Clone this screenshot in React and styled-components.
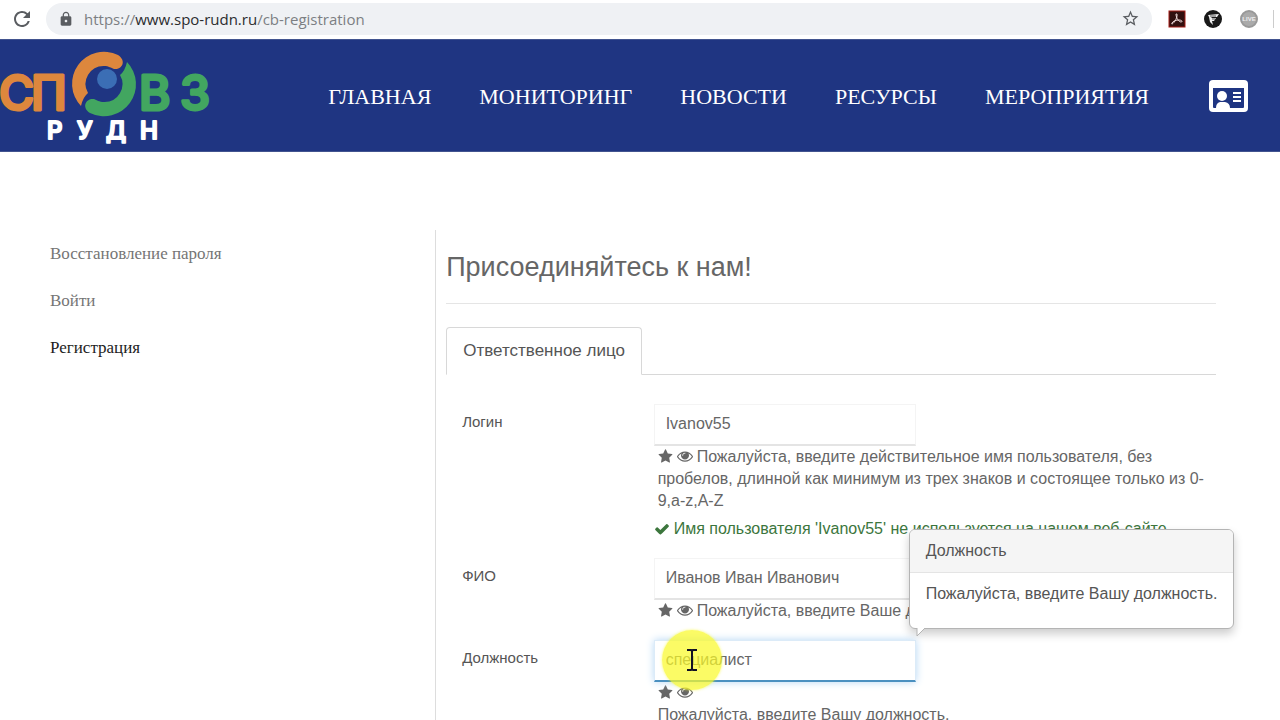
import React from "react";
import styled, { createGlobalStyle } from "styled-components";
import { MdLock, MdRefresh, MdStarBorder } from "react-icons/md";

const GlobalStyle = createGlobalStyle`
  * {
    box-sizing: border-box;
  }
  body {
    margin: 0;
    background: #fff;
    color: #666;
    font-family: "Liberation Sans", Arial, sans-serif;
    font-size: 16px;
    line-height: 22px;
  }
`;

/* browser toolbar */

const Toolbar = styled.div`
  display: flex;
  align-items: center;
  height: 39px;
  padding: 0 6px 2px 10px;
  background: #fff;
`;

const ToolButton = styled.button`
  display: flex;
  padding: 0;
  border: none;
  background: none;
  color: #5a5d61;
  cursor: pointer;
`;

const AddressBar = styled.div`
  display: flex;
  flex: 1;
  align-items: center;
  height: 32px;
  margin: 0 16px 0 12px;
  padding: 0 12px;
  border-radius: 16px;
  background: #eff1f4;
  color: #5a5d61;
`;

const Address = styled.span`
  flex: 1;
  margin-left: 10px;
  color: #7c7f83;
  font-family: "Open Sans", "Noto Sans", sans-serif;
  font-size: 15px;
`;

const Host = styled.span`
  color: #2b2c2e;
`;

const Extensions = styled.div`
  display: flex;
  gap: 18px;
  padding-right: 15px;
  border-right: 1px solid #ccc;
`;

/* site header */

const Header = styled.header`
  display: flex;
  align-items: center;
  justify-content: space-between;
  height: 113px;
  padding-right: 32px;
  background: #1f3582;
  border-top: 1px solid #42548f;
  border-bottom: 1px solid #42548f;
`;

const HomeLink = styled.a`
  display: flex;
`;

const Nav = styled.nav`
  display: flex;
  align-items: center;
  gap: 48px;
`;

const NavLink = styled.a`
  padding-top: 2px;
  color: #fff;
  font-family: "Liberation Serif", "Times New Roman", serif;
  font-size: 22px;
  line-height: 28px;
  text-decoration: none;
`;

const ProfileLink = styled.a`
  display: flex;
  margin-left: 12px;
`;

/* content */

const Page = styled.div`
  display: grid;
  grid-template-columns: 34% 1fr;
  padding-top: 78px;
`;

const Sidebar = styled.aside`
  display: flex;
  flex-direction: column;
  align-items: flex-start;
  gap: 25px;
  padding: 13px 0 0 50px;
`;

const SideLink = styled.a`
  color: ${(props) => (props.$active ? "#1d1d1d" : "#757575")};
  font-family: "Liberation Serif", "Times New Roman", serif;
  font-size: 17px;
  text-decoration: none;
`;

const Main = styled.main`
  padding: 20px 64px 0 10px;
  border-left: 1px solid #ddd;
`;

const Title = styled.h1`
  margin: 0 0 23px;
  padding-bottom: 19px;
  border-bottom: 1px solid #e5e5e5;
  color: #666;
  font-size: 27px;
  font-weight: normal;
  line-height: 34px;
`;

const Tabs = styled.div`
  display: flex;
  margin-bottom: 29px;
  border-bottom: 1px solid #d8d8d8;
`;

const Tab = styled.button`
  height: 48px;
  margin-bottom: -1px;
  padding: 0 16px;
  border: 1px solid #d8d8d8;
  border-bottom-color: #fff;
  border-radius: 4px 4px 0 0;
  background: #fff;
  color: #555;
  font-family: inherit;
  font-size: 17px;
`;

const Row = styled.div`
  display: grid;
  grid-template-columns: 25% 1fr;
  margin-bottom: 18px;
`;

const Label = styled.label`
  padding: 7px 0 0 16px;
  color: #555;
  font-size: 15px;
`;

const Field = styled.div`
  padding-left: 15px;
`;

const Input = styled.input`
  display: block;
  width: 262px;
  height: 42px;
  padding: 0 11px 2px;
  border: 1px solid #f4f4f4;
  border-bottom: 2px solid #e4e4e4;
  border-radius: 0;
  outline: none;
  background: #fff;
  color: #666;
  font-family: inherit;
  font-size: 16px;

  ${(props) =>
    props.$focused &&
    `
    border-color: #dcebf8;
    border-bottom-color: #4a90c0;
    box-shadow: 0 0 8px #b5d7f5;
  `}
`;

const Help = styled.div`
  padding-left: 4px;
  color: #666;

  svg {
    margin-right: 4px;
    vertical-align: -2px;
  }
`;

const Valid = styled.div`
  display: flex;
  align-items: center;
  gap: 4px;
  margin-top: 6px;
  color: #3c763d;
`;

const InputWrap = styled.div`
  position: relative;
  width: 262px;
`;

const Popover = styled.div`
  position: absolute;
  z-index: 2;
  bottom: calc(100% + 11px);
  left: 255px;
  width: 325px;
`;

const PopoverBox = styled.div`
  border: 1px solid #b4b4b4;
  border-radius: 6px;
  background: #fff;
  box-shadow: 0 5px 10px rgba(0, 0, 0, 0.2);
  color: #555;
  overflow: hidden;
`;

const PopoverTitle = styled.div`
  padding: 10px 16px;
  border-bottom: 1px solid #e4e4e4;
  background: #f5f5f5;
`;

const PopoverBody = styled.div`
  padding: 10px 16px 23px;
  white-space: nowrap;
`;

const PopoverArrow = styled.svg`
  position: absolute;
  top: calc(100% - 1px);
  left: 7px;
`;

const Pointer = styled.div`
  position: absolute;
  top: -10px;
  left: 8px;
  display: flex;
  align-items: center;
  justify-content: center;
  width: 60px;
  height: 60px;
  border-radius: 50%;
  background: rgba(250, 249, 42, 0.72);
  box-shadow: 0 0 3px rgba(250, 249, 42, 0.7);
  pointer-events: none;
`;

const Star = () => (
  <svg width="15" height="15" viewBox="0 0 1664 1792" fill="#666">
    <path d="M1664 647q0 22-26 48l-363 354 86 500q1 7 1 20 0 21-10.500 35.500t-30.500 14.500q-19 0-40-12l-449-236-449 236q-22 12-40 12-21 0-31.500-14.500t-10.500-35.500q0-6 2-20l86-500-364-354q-25-27-25-48 0-37 56-46l502-73 225-455q19-41 49-41t49 41l225 455 502 73q56 9 56 46z" />
  </svg>
);

const Eye = () => (
  <svg width="16" height="16" viewBox="0 0 1792 1792" fill="#666">
    <path d="M1664 960q-152-236-381-353 61 104 61 225 0 185-131.500 316.500t-316.500 131.500-316.500-131.500-131.500-316.500q0-121 61-225-229 117-381 353 133 205 333.500 326.500t434.500 121.500 434.500-121.500 333.500-326.500zm-720-384q0-20-14-34t-34-14q-125 0-214.500 89.500t-89.500 214.500q0 20 14 34t34 14 34-14 14-34q0-86 61-147t147-61q20 0 34-14t14-34zm848 384q0 34-20 69-140 230-376.500 368.500t-499.500 138.500-499.500-139-376.500-368q-20-35-20-69t20-69q140-229 376.500-368t499.500-139 499.500 139 376.500 368q20 35 20 69z" />
  </svg>
);

const Check = () => (
  <svg width="16" height="16" viewBox="0 0 1792 1792" fill="#3c763d">
    <path d="M1671 566q0 40-28 68l-724 724-136 136q-28 28-68 28t-68-28l-136-136-362-362q-28-28-28-68t28-68l136-136q28-28 68-28t68 28l294 295 656-657q28-28 68-28t68 28l136 136q28 28 28 68z" />
  </svg>
);

const Logo = () => (
  <svg width="220" height="110" viewBox="0 0 220 110">
    <g
      fontFamily="Inter, sans-serif"
      fontWeight="500"
      strokeLinejoin="round"
      strokeLinecap="round"
    >
      <g fontSize="48" strokeWidth="3">
        <text x="-1 31" y="69" fill="#dd873d" stroke="#dd873d">
          СП
        </text>
        <text x="139 180" y="69" fill="#42a660" stroke="#42a660">
          ВЗ
        </text>
      </g>
      <text
        x="47 77 106 140"
        y="98"
        fontSize="24"
        fill="#fff"
        stroke="#fff"
        strokeWidth="2"
      >
        РУДН
      </text>
    </g>
    <path
      d="M81 65 A32 32 0 0 1 118 14 C127 20 122 29 114 28 C111 27 109 25 104 25 A18 18 0 0 0 88 52 Q83 56 81 65 Z"
      fill="#dd873d"
    />
    <path
      d="M127 21 A32 32 0 0 1 90 72 C81 66 86 57 94 58 C97 59 99 61 104 61 A18 18 0 0 0 120 34 Q125 30 127 21 Z"
      fill="#42a660"
    />
    <circle cx="107" cy="38" r="10" fill="#3b6eb5" />
  </svg>
);

const ProfileIcon = () => (
  <svg width="39" height="32" viewBox="0 0 39 32">
    <rect width="39" height="32" rx="4" fill="#fff" />
    <path d="M4 8h31v19q0 1-1 1H21q0-5-5-6h-5q-4 1-4 6H5q-1 0-1-1z" fill="#1f3582" />
    <circle cx="13" cy="16" r="5" fill="#fff" />
    <path d="M24 13h8M24 17h8M24 21h8" stroke="#fff" strokeWidth="2" />
  </svg>
);

const AcrobatIcon = () => (
  <svg width="18" height="18" viewBox="0 0 18 18">
    <rect x="1" y="1" width="16" height="16" fill="#31100f" stroke="#a51c17" strokeWidth="1" />
    <path
      d="M8 4c2-1 1 4-1 7s-4 4-3 2 4-3 7-3 4 2 2 2-5-4-5-8z"
      fill="none"
      stroke="#f3dede"
      strokeWidth="1"
    />
  </svg>
);

const ShieldIcon = () => (
  <svg width="18" height="18" viewBox="0 0 18 18">
    <circle cx="9" cy="9" r="9" fill="#191919" />
    <path d="M4 5l11-1-2 3H8l-1 1h5l-2 3H8l1 4-3-3-1-5z" fill="#eee" />
    <path d="M6 6h6M8 9h3" stroke="#555" />
  </svg>
);

const LiveIcon = () => (
  <svg width="18" height="18" viewBox="0 0 18 18">
    <circle cx="9" cy="9" r="8" fill="#aaa" stroke="#999" strokeWidth="2" />
    <text
      x="9"
      y="11"
      fill="#eee"
      fontFamily="Liberation Sans, sans-serif"
      fontSize="6"
      fontWeight="bold"
      textAnchor="middle"
    >
      LIVE
    </text>
  </svg>
);

const IBeam = () => (
  <svg width="12" height="22" viewBox="0 0 12 22">
    <path d="M1 1h4l1 1 1-1h4M6 2v18M1 21h4l1-1 1 1h4" fill="none" stroke="#111125" strokeWidth="2" />
  </svg>
);

const navItems = ["ГЛАВНАЯ", "МОНИТОРИНГ", "НОВОСТИ", "РЕСУРСЫ", "МЕРОПРИЯТИЯ"];

export default class App extends React.Component {
  state = {
    login: "Ivanov55",
    name: "Иванов Иван Иванович",
    position: "специалист",
  };

  change = (e) => {
    this.setState({ [e.target.name]: e.target.value });
  };

  render() {
    return (
      <>
        <GlobalStyle />
        <Toolbar>
          <ToolButton aria-label="Обновить">
            <MdRefresh size={24} />
          </ToolButton>
          <AddressBar>
            <MdLock size={16} />
            <Address>
              https://<Host>www.spo-rudn.ru</Host>/cb-registration
            </Address>
            <ToolButton aria-label="Закладка">
              <MdStarBorder size={19} />
            </ToolButton>
          </AddressBar>
          <Extensions>
            <ToolButton aria-label="Acrobat">
              <AcrobatIcon />
            </ToolButton>
            <ToolButton aria-label="Shield">
              <ShieldIcon />
            </ToolButton>
            <ToolButton aria-label="Live">
              <LiveIcon />
            </ToolButton>
          </Extensions>
        </Toolbar>
        <Header>
          <HomeLink href="#" aria-label="СПО ВЗ РУДН">
            <Logo />
          </HomeLink>
          <Nav>
            {navItems.map((item) => (
              <NavLink href="#" key={item}>
                {item}
              </NavLink>
            ))}
            <ProfileLink href="#" aria-label="Профиль">
              <ProfileIcon />
            </ProfileLink>
          </Nav>
        </Header>
        <Page>
          <Sidebar>
            <SideLink href="#">Восстановление пароля</SideLink>
            <SideLink href="#">Войти</SideLink>
            <SideLink href="#" $active>
              Регистрация
            </SideLink>
          </Sidebar>
          <Main>
            <Title>Присоединяйтесь к нам!</Title>
            <Tabs>
              <Tab>Ответственное лицо</Tab>
            </Tabs>
            <form>
              <Row>
                <Label htmlFor="login">Логин</Label>
                <Field>
                  <Input
                    id="login"
                    name="login"
                    type="text"
                    value={this.state.login}
                    onChange={this.change}
                  />
                  <Help>
                    <Star />
                    <Eye />
                    Пожалуйста, введите действительное имя пользователя, без
                    пробелов, длинной как минимум из трех знаков и состоящее
                    только из 0-9,a-z,A-Z
                  </Help>
                  <Valid>
                    <Check />
                    Имя пользователя 'Ivanov55' не используется на нашем
                    веб-сайте.
                  </Valid>
                </Field>
              </Row>
              <Row>
                <Label htmlFor="name">ФИО</Label>
                <Field>
                  <Input
                    id="name"
                    name="name"
                    type="text"
                    value={this.state.name}
                    onChange={this.change}
                  />
                  <Help>
                    <Star />
                    <Eye />
                    Пожалуйста, введите Ваше д
                  </Help>
                </Field>
              </Row>
              <Row>
                <Label htmlFor="position">Должность</Label>
                <Field>
                  <InputWrap>
                    <Input
                      id="position"
                      name="position"
                      type="text"
                      $focused
                      value={this.state.position}
                      onChange={this.change}
                    />
                    <Pointer>
                      <IBeam />
                    </Pointer>
                    <Popover>
                      <PopoverBox>
                        <PopoverTitle>Должность</PopoverTitle>
                        <PopoverBody>
                          Пожалуйста, введите Вашу должность.
                        </PopoverBody>
                      </PopoverBox>
                      <PopoverArrow width="10" height="9" viewBox="0 0 10 9">
                        <path d="M1 0v8l8-8z" fill="#fff" />
                        <path d="M1 0v8l8-8" fill="none" stroke="#b4b4b4" />
                      </PopoverArrow>
                    </Popover>
                  </InputWrap>
                  <Help>
                    <Star />
                    <Eye />
                    <div>Пожалуйста, введите Вашу должность.</div>
                  </Help>
                </Field>
              </Row>
            </form>
          </Main>
        </Page>
      </>
    );
  }
}
